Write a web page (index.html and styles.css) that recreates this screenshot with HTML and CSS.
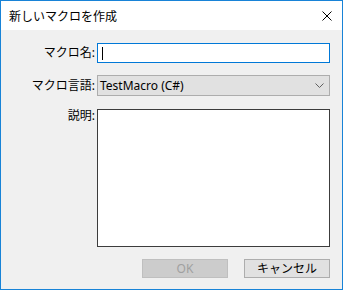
FILE: index.html
```html
<!DOCTYPE html>
<html lang="ja">
<head>
	<meta charset="UTF-8">
	<title>新しいマクロを作成</title>
	<link rel="stylesheet" href="styles.css">
</head>
<body>
	<div class="window">
		<div class="titlebar">
			<span class="title">新しいマクロを作成</span>
			<svg class="close" width="10" height="10" viewBox="0 0 10 10">
				<path d="M0.5 0.5 L9.5 9.5 M9.5 0.5 L0.5 9.5" stroke="#000" stroke-width="1" fill="none"/>
			</svg>
		</div>
		<div class="content">
			<div class="form">
				<label class="label">マクロ名:</label>
				<div class="textbox"><span class="caret"></span></div>
				<label class="label">マクロ言語:</label>
				<div class="combo">
					<span>TestMacro (C#)</span>
					<svg class="chevron" width="9" height="5" viewBox="0 0 9 5">
						<path d="M0.5 0.5 L4.5 4.5 L8.5 0.5" stroke="#606060" stroke-width="1" fill="none"/>
					</svg>
				</div>
				<label class="label label-top">説明:</label>
				<div class="memo"></div>
			</div>
			<div class="buttons">
				<button class="btn btn-disabled" disabled>OK</button>
				<button class="btn">キャンセル</button>
			</div>
		</div>
	</div>
</body>
</html>
```

FILE: styles.css
```css
body {
	margin: 0;
	font-family: "Noto Sans", "Noto Sans CJK JP", sans-serif;
	font-size: 12px;
	color: #000;
}
.window {
	width: 343px;
	height: 290px;
	box-sizing: border-box;
	border: 1px solid #1883d7;
	background-color: #f0f0f0;
	display: flex;
	flex-direction: column;
}
.titlebar {
	height: 29px;
	background-color: #fff;
	display: flex;
	align-items: center;
	padding: 0 10px 0 8px;
}
.title {
	flex: 1;
	font-size: 12px;
	line-height: 14px;
	margin-top: 2px;
}
.close {
	display: block;
}
.content {
	padding: 13px 12px 0 0;
}
.form {
	display: grid;
	grid-template-columns: 94px 233px;
	column-gap: 2px;
	row-gap: 12px;
}
.label {
	text-align: right;
	align-self: center;
	line-height: 14px;
}
.label-top {
	align-self: start;
	margin-top: 1px;
}
.textbox {
	height: 20px;
	box-sizing: border-box;
	border: 1px solid #0078d7;
	background-color: #fff;
	display: flex;
	align-items: center;
	padding-left: 4px;
}
.caret {
	width: 1px;
	height: 13px;
	background-color: #000;
}
.combo {
	height: 21px;
	box-sizing: border-box;
	border: 1px solid #adadad;
	background-color: #e1e1e1;
	display: flex;
	align-items: center;
	justify-content: space-between;
	padding: 0 5px 0 2px;
	font-size: 12px;
}
.chevron {
	display: block;
}
.memo {
	height: 138px;
	box-sizing: border-box;
	border: 1px solid #3c3c3c;
	background-color: #fff;
	margin-top: 1px;
}
.buttons {
	display: flex;
	justify-content: flex-end;
	gap: 16px;
	margin-top: 12px;
}
.btn {
	width: 86px;
	height: 19px;
	box-sizing: border-box;
	border: 1px solid #adadad;
	background-color: #e1e1e1;
	font-family: "Noto Sans", "Noto Sans CJK JP", sans-serif;
	font-size: 12px;
	line-height: 14px;
	color: #000;
	padding: 0;
}
.btn-disabled {
	background-color: #cccccc;
	border-color: #bfbfbf;
	color: #a0a0a0;
}
```
